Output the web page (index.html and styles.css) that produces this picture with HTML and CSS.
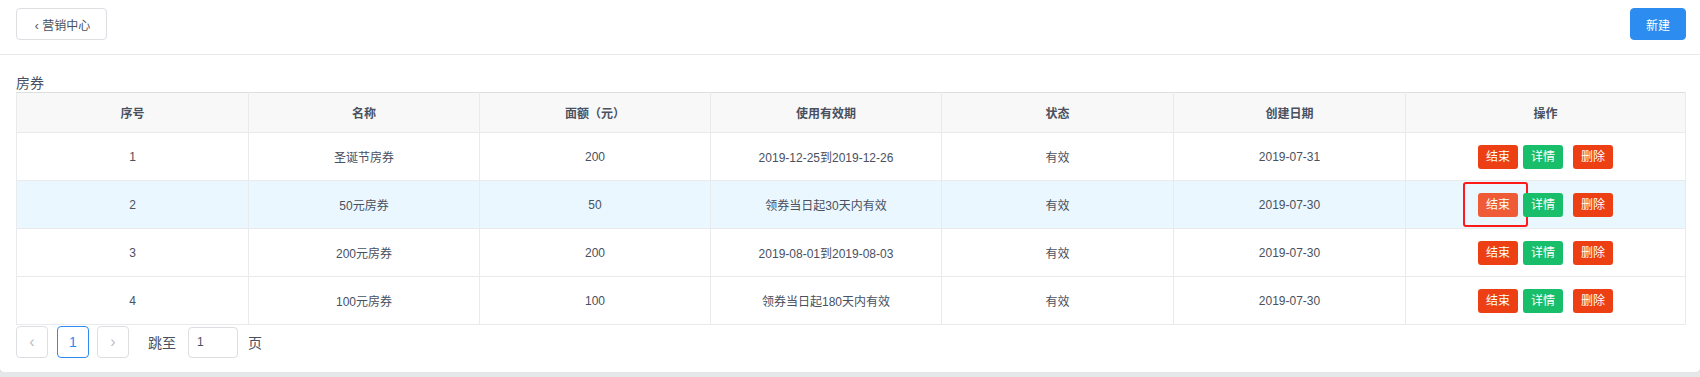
FILE: index.html
```html
<!DOCTYPE html>
<html>
<head>
  <meta charset="utf-8">
  <link rel="stylesheet" href="styles.css">
</head>
<body>
  <div class="card">
    <!-- top bar -->
    <div class="topbar">
      <button class="btn-back">&lsaquo;&nbsp;营销中心</button>
      <button class="btn-new">新建</button>
    </div>

    <div class="content">
      <div class="caption">房券</div>
      <table class="grid">
        <colgroup>
          <col style="width:232px"><col style="width:231px"><col style="width:231px">
          <col style="width:231px"><col style="width:232px"><col style="width:232px"><col>
        </colgroup>
        <tr>
          <th>序号</th><th>名称</th><th>面额（元）</th><th>使用有效期</th><th>状态</th><th>创建日期</th><th>操作</th>
        </tr>
        <tr>
          <td>1</td><td>圣诞节房券</td><td>200</td><td>2019-12-25到2019-12-26</td><td>有效</td><td>2019-07-31</td>
          <td><div class="ops"><span class="op red">结束</span><span class="op green">详情</span><span class="op red del">删除</span></div></td>
        </tr>
        <tr class="hover">
          <td>2</td><td>50元房券</td><td>50</td><td>领券当日起30天内有效</td><td>有效</td><td>2019-07-30</td>
          <td><div class="ops"><span class="op red lit">结束<i class="mark"></i></span><span class="op green">详情</span><span class="op red del">删除</span></div></td>
        </tr>
        <tr>
          <td>3</td><td>200元房券</td><td>200</td><td>2019-08-01到2019-08-03</td><td>有效</td><td>2019-07-30</td>
          <td><div class="ops"><span class="op red">结束</span><span class="op green">详情</span><span class="op red del">删除</span></div></td>
        </tr>
        <tr>
          <td>4</td><td>100元房券</td><td>100</td><td>领券当日起180天内有效</td><td>有效</td><td>2019-07-30</td>
          <td><div class="ops"><span class="op red">结束</span><span class="op green">详情</span><span class="op red del">删除</span></div></td>
        </tr>
      </table>

      <!-- pager -->
      <div class="pager">
        <span class="pg off">&lsaquo;</span>
        <span class="pg on">1</span>
        <span class="pg off">&rsaquo;</span>
        <span class="jump">跳至</span>
        <input class="jump-input" type="text" value="1">
        <span class="unit">页</span>
      </div>
    </div>
  </div>
</body>
</html>
```

FILE: styles.css
```css
*
{
   margin: 0;
   box-sizing: border-box;
}
body
{
   font-family: "Liberation Sans", "Noto Sans CJK SC", sans-serif;
   font-size: 12px;
   color: #495060;
   background-color: #e6e7e9;
}
.card
{
   height: 372px;
   background-color: #fff;
   border-radius: 0 0 4px 4px;
   box-shadow: 0 1px 3px rgba(0, 0, 0, 0.12);
}
.topbar
{
   height: 55px;
   display: flex;
   justify-content: space-between;
   align-items: flex-start;
   padding: 8px 14px 0 16px;
   border-bottom: 1px solid #e8eaec;
}
button
{
   font-family: inherit;
   font-size: 12px;
   height: 32px;
   border-radius: 4px;
   cursor: pointer;
}
.btn-back
{
   width: 91px;
   padding-left: 8px;
   background-color: #fff;
   border: 1px solid #dddee1;
   color: #495060;
}
.btn-new
{
   width: 56px;
   background-color: #2d8cf0;
   border: 1px solid #2d8cf0;
   color: #fff;
}
.content
{
   padding: 17px 14px 0 16px;
}
.caption
{
   font-size: 14px;
   height: 20px;
   line-height: 22px;
}
.grid
{
   width: 1670px;
   table-layout: fixed;
   border-collapse: collapse;
   border: 1px solid #dddee1;
   font-size: 12px;
}
.grid th
{
   height: 40px;
   background-color: #f8f8f9;
   font-weight: bold;
   border: 1px solid #e9eaec;
   border-top-color: #dddee1;
}
.grid td
{
   height: 48px;
   text-align: center;
   border: 1px solid #e9eaec;
}
.grid tr.hover td
{
   background-color: #ebf7ff;
}
.ops
{
   display: flex;
   justify-content: center;
}
.op
{
   position: relative;
   width: 40px;
   height: 24px;
   line-height: 24px;
   border-radius: 3px;
   color: #fff;
   margin-left: 5px;
}
.op:first-child
{
   margin-left: 0;
}
.op.del
{
   margin-left: 10px;
}
.red
{
   background-color: #ed3f14;
}
.green
{
   background-color: #19be6b;
}
.red.lit
{
   background-color: #f05b37;
}
/* red annotation frame */
.mark
{
   position: absolute;
   left: -15px;
   top: -11px;
   width: 65px;
   height: 45px;
   border: 2px solid #ff1a1a;
   border-radius: 3px;
}
.pager
{
   display: flex;
   align-items: center;
   height: 32px;
   margin-top: 1px;
}
.pg
{
   width: 32px;
   height: 32px;
   line-height: 30px;
   text-align: center;
   border: 1px solid #dddee1;
   border-radius: 4px;
   margin-right: 8px;
   font-size: 14px;
}
.pg.off
{
   color: #bbbec4;
   font-size: 16px;
}
.pg.on
{
   border-color: #2d8cf0;
   color: #2d8cf0;
   margin-left: 1px;
}
.jump
{
   font-size: 14px;
   margin-left: 11px;
}
.jump-input
{
   width: 50px;
   height: 31px;
   margin-left: 12px;
   padding-left: 8px;
   border: 1px solid #dddee1;
   border-radius: 4px;
   font-family: inherit;
   font-size: 12px;
   color: #495060;
}
.unit
{
   font-size: 14px;
   margin-left: 10px;
}
```
